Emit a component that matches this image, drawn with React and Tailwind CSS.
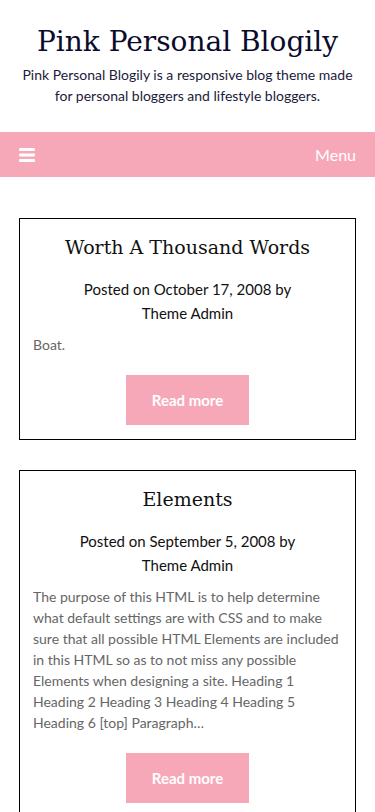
const posts = [
  {
    title: "Worth A Thousand Words",
    date: "October 17, 2008",
    excerpt: "Boat.",
  },
  {
    title: "Elements",
    date: "September 5, 2008",
    excerpt:
      "The purpose of this HTML is to help determine what default settings are with CSS and to make sure that all possible HTML Elements are included in this HTML so as to not miss any possible Elements when designing a site. Heading 1 Heading 2 Heading 3 Heading 4 Heading 5 Heading 6 [top] Paragraph…",
  },
];

const serif = { fontFamily: '"DejaVu Serif", "Liberation Serif", serif' };

const PostCard = ({ post }) => (
  <article className="border border-black px-[13px] pt-[12px] pb-[14px]">
    <h2
      className="text-center text-[19px] leading-[32px] text-[#111]"
      style={serif}
    >
      {post.title}
    </h2>
    <p className="mt-[14px] text-center text-[15px] leading-[24px] text-[#111]">
      Posted on {post.date} by
      <br />
      Theme Admin
    </p>
    <p className="-mr-[6px] mt-[9px] text-[14px] leading-[21px] text-[#666]">
      {post.excerpt}
    </p>
    <div className="mt-[20px] flex justify-center">
      <a className="flex h-[50px] w-[123px] items-center justify-center bg-[#f7a8b8] text-[15px] font-bold text-white">
        Read more
      </a>
    </div>
  </article>
);

export default function App() {
  return (
    <div
      className="min-h-screen bg-white"
      style={{ fontFamily: 'Lato, "Open Sans", sans-serif' }}
    >
      <header className="px-4 pt-[20px] pb-[26px] text-center">
        <h1 className="text-[28px] leading-[44px] text-[#0b0b2b]" style={serif}>
          Pink Personal Blogily
        </h1>
        <p className="text-[14px] leading-[21px] text-[#1b1b3a]">
          Pink Personal Blogily is a responsive blog theme made
          <br />
          for personal bloggers and lifestyle bloggers.
        </p>
      </header>

      <nav className="flex h-[45px] items-center justify-between bg-[#f7a8b8] px-[19px] text-white">
        <svg width="16" height="14" viewBox="0 0 16 14" fill="white">
          <rect x="0" y="0" width="16" height="3" rx="1" />
          <rect x="0" y="5.5" width="16" height="3" rx="1" />
          <rect x="0" y="11" width="16" height="3" rx="1" />
        </svg>
        <span className="text-[16px]">Menu</span>
      </nav>

      <main className="flex flex-col gap-[30px] px-[19px] pt-[41px] pb-8">
        {posts.map((post) => (
          <PostCard key={post.title} post={post} />
        ))}
      </main>
    </div>
  );
}
